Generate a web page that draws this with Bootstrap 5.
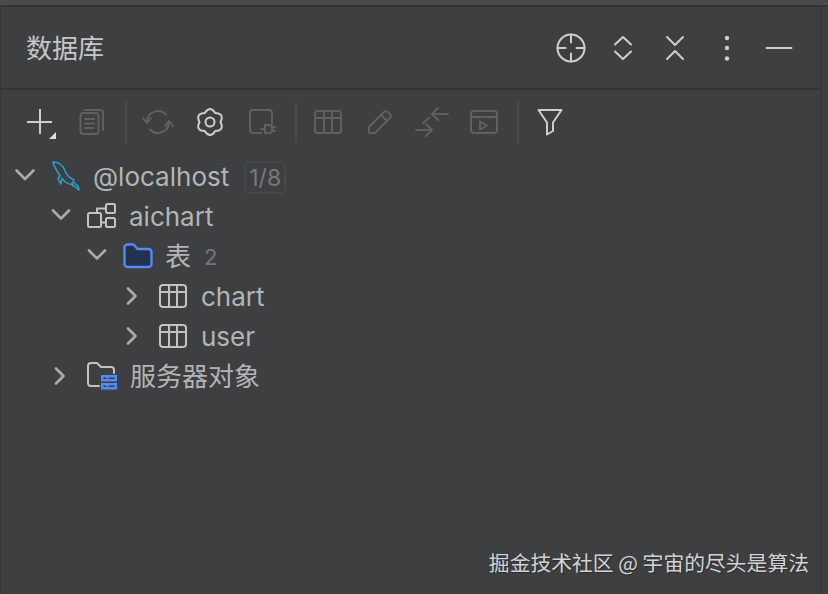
<!DOCTYPE html>
<html lang="zh-CN">
<head>
    <meta charset="UTF-8">
    <meta name="viewport" content="width=device-width, initial-scale=1.0">
    <title>数据库</title>
    <link href="https://cdn.jsdelivr.net/npm/bootstrap@5.3.0/dist/css/bootstrap.min.css" rel="stylesheet">
    <style>
        html, body {
            height: 100%;
        }
        body {
            background-color: #3e3f41;
            color: #b2b4b6;
            font-family: "Inter", "Noto Sans", "Noto Sans CJK SC", sans-serif;
            overflow: hidden;
        }
        .db-window {
            height: 594px;
            border-top: 5px solid #484a4b;
            box-shadow: inset 0 2px 0 #333436;
            padding-top: 2px;
            position: relative;
        }
        .db-panel {
            height: 100%;
            border-left: 1px solid #343537;
            border-right: 2px solid #37383a;
            margin-right: 6px;
            background-color: #3e3f41;
        }
        .db-header {
            height: 83px;
            padding-left: 25px;
            padding-top: 2px;
            border-bottom: 2px solid #323335;
            color: #c4c6c7;
        }
        .db-title {
            font-size: 26px;
            line-height: 1;
        }
        .head-tools {
            margin-right: 15px;
            margin-top: -1px;
        }
        .head-btn {
            width: 52px;
            height: 40px;
        }
        .db-toolbar {
            height: 64px;
            padding-left: 13px;
        }
        .tool-btn {
            width: 52px;
            height: 44px;
            position: relative;
        }
        .tool-sep {
            width: 2px;
            height: 41px;
            margin: 0 5px 0 7px;
            background-color: #4a4c4e;
        }
        .db-tree {
            margin-top: 3px;
        }
        .tree-row {
            height: 40px;
            font-size: 26px;
            line-height: 40px;
            white-space: nowrap;
        }
        .lvl-0 { padding-left: 12px; }
        .lvl-1 { padding-left: 48px; }
        .lvl-2 { padding-left: 84px; }
        .lvl-3 { padding-left: 118px; }
        .lvl-1b { padding-left: 46px; }
        .tw {
            width: 24px;
            flex: none;
        }
        .node-icon {
            flex: none;
            margin-left: 14px;
            margin-top: -2px;
        }
        .lvl-3 .node-icon, .lvl-1b .node-icon {
            margin-left: 16px;
        }
        .node-name {
            margin-left: 12px;
        }
        .lvl-3 .node-name {
            margin-left: 14px;
        }
        .count-tag {
            margin-left: 15px;
            width: 42px;
            height: 33px;
            line-height: 30px;
            font-size: 23px;
            text-align: center;
            color: #77797b;
            border: 2px solid #47484a;
            border-radius: 6px;
        }
        .count-plain {
            margin-left: 13px;
            font-size: 22px;
            color: #737577;
        }
        .db-mark {
            position: absolute;
            right: 19px;
            bottom: 19px;
            font-size: 20.800px;
            line-height: 1.2;
            color: #d2d3d4;
            text-shadow: 1px 1px 1px #2c2d2e;
            font-family: "Noto Sans CJK SC", sans-serif;
        }
        svg {
            display: block;
            fill: none;
            stroke-linecap: round;
            stroke-linejoin: round;
        }
        .ic-on { stroke: #cdced0; stroke-width: 2; }
        .ic-off { stroke: #5e6062; stroke-width: 2; }
        .ic-tree { stroke: #c2c3c5; stroke-width: 2; }
        .ic-chev { stroke: #a9abad; stroke-width: 2.6; }
    </style>
</head>
<body>

<div class="db-window">
    <div class="db-panel">
        <div class="db-header d-flex align-items-center justify-content-between">
            <div class="db-title">数据库</div>
            <div class="head-tools d-flex align-items-center">
                <div class="head-btn d-flex align-items-center justify-content-center">
                    <svg class="ic-on" width="30" height="30" viewBox="0 0 30 30"><circle cx="15" cy="15" r="13.500"/><path d="M15 1.500v8M15 20.500v8M1.500 15h8M20.500 15h8"/></svg>
                </div>
                <div class="head-btn d-flex align-items-center justify-content-center">
                    <svg class="ic-on" width="20" height="26" viewBox="0 0 20 26"><path d="M2 9.500l8-7.500 8 7.500M2 16.500l8 7.500 8-7.500"/></svg>
                </div>
                <div class="head-btn d-flex align-items-center justify-content-center">
                    <svg class="ic-on" width="20" height="26" viewBox="0 0 20 26"><path d="M2 2l8 8 8-8M2 24l8-8 8 8"/></svg>
                </div>
                <div class="head-btn d-flex align-items-center justify-content-center">
                    <svg width="6" height="26" viewBox="0 0 6 26"><circle cx="3" cy="3" r="2.200" fill="#cdced0"/><circle cx="3" cy="13" r="2.200" fill="#cdced0"/><circle cx="3" cy="23.500" r="2.200" fill="#cdced0"/></svg>
                </div>
                <div class="head-btn d-flex align-items-center justify-content-center">
                    <svg class="ic-on" width="28" height="4" viewBox="0 0 28 4"><path d="M1.500 2h25"/></svg>
                </div>
            </div>
        </div>

        <div class="db-toolbar d-flex align-items-center">
            <div class="tool-btn d-flex align-items-center justify-content-center">
                <svg width="36" height="36" viewBox="0 0 36 36"><path class="ic-on" d="M18 5v25M5 18h25" stroke-linecap="butt"/><path d="M27 35l7-7v7z" fill="#dcdddf"/></svg>
            </div>
            <div class="tool-btn d-flex align-items-center justify-content-center">
                <svg class="ic-off" width="26" height="28" viewBox="0 0 26 28"><rect x="1.500" y="5" width="18" height="21" rx="3"/><path d="M6 2h15a3 3 0 0 1 3 3v17M6 11h9M6 15.500h9M6 20h9"/></svg>
            </div>
            <div class="tool-sep"></div>
            <div class="tool-btn d-flex align-items-center justify-content-center">
                <svg class="ic-off" width="32" height="26" viewBox="0 0 32 26"><path d="M5 13a11 11 0 0 1 19-7.500M27 13a11 11 0 0 1-19 7.500M1 9l4 5 4-5M23 17l4-5 4 5"/></svg>
            </div>
            <div class="tool-btn d-flex align-items-center justify-content-center">
                <svg class="ic-on" width="28" height="28" viewBox="0 0 28 28"><path d="M8.750 4.910Q14-3 19.250 4.910Q28.720 5.500 24.500 14Q28.720 22.500 19.250 23.090Q14 31 8.750 23.090Q-.72 22.500 3.500 14Q-.72 5.500 8.750 4.910Z"/><circle cx="14" cy="14" r="4.500"/></svg>
            </div>
            <div class="tool-btn d-flex align-items-center justify-content-center">
                <svg class="ic-off" width="28" height="28" viewBox="0 0 28 28"><path d="M13 25H5a3 3 0 0 1-3-3V5a3 3 0 0 1 3-3h16a3 3 0 0 1 3 3v11"/><path d="M13 21h4M17 17h4a3 3 0 0 1 3 3v2a3 3 0 0 1-3 3h-4zM24 19h3M24 23h3"/></svg>
            </div>
            <div class="tool-sep"></div>
            <div class="tool-btn d-flex align-items-center justify-content-center">
                <svg class="ic-off" width="28" height="24" viewBox="0 0 28 24"><rect x="1" y="1" width="26" height="22" rx="3"/><path d="M1 8h26M10 1v22M18 1v22"/></svg>
            </div>
            <div class="tool-btn d-flex align-items-center justify-content-center">
                <svg class="ic-off" width="26" height="26" viewBox="0 0 26 26"><path d="M2 24v-6L17 3a2.800 2.800 0 0 1 4 0l2 2a2.800 2.800 0 0 1 0 4L8 24zM14 6l6 6"/></svg>
            </div>
            <div class="tool-btn d-flex align-items-center justify-content-center">
                <svg class="ic-off" width="34" height="30" viewBox="0 0 34 30"><path d="M33 7H17M23 1l-6 6 6 6M1 23h16M11 17l6 6-6 6M8 16l6-5"/></svg>
            </div>
            <div class="tool-btn d-flex align-items-center justify-content-center">
                <svg class="ic-off" width="28" height="24" viewBox="0 0 28 24"><rect x="1" y="1" width="26" height="22" rx="3"/><path d="M1 7h26M10 11.500v8l7-4z"/></svg>
            </div>
            <div class="tool-sep"></div>
            <div class="tool-btn d-flex align-items-center justify-content-center">
                <svg class="ic-on" width="26" height="28" viewBox="0 0 26 28"><path d="M1.500 2h23L16 14.500V23l-6 3.500V14.500z"/></svg>
            </div>
        </div>

        <div class="db-tree">
            <div class="tree-row lvl-0 d-flex align-items-center">
                <svg class="ic-chev tw" width="24" height="24" viewBox="0 0 24 24"><path d="M3.500 5.500l8.500 8.500 8.500-8.500"/></svg>
                <svg class="node-icon" width="30" height="30" viewBox="0 0 30 30" stroke="#2a9fd0" stroke-width="1.500"><path d="M2 1c6 0 10 3 12 9 1.500 4 5 7 9 9l-1 2 5 4 1 4-6-5c-5-1-9-3-11-7l-1 6-3-5 2-3C6 10 3 6 2 1zM21 22l1 3"/></svg>
                <span class="node-name">@localhost</span>
                <span class="count-tag">1/8</span>
            </div>
            <div class="tree-row lvl-1 d-flex align-items-center">
                <svg class="ic-chev tw" width="24" height="24" viewBox="0 0 24 24"><path d="M4 5.500l8 8 8-8"/></svg>
                <svg class="ic-tree node-icon" width="30" height="26" viewBox="0 0 30 26"><rect x="1" y="10" width="13" height="14" rx="1.500"/><rect x="19" y="1" width="9" height="9" rx="1.500"/><rect x="19" y="15" width="9" height="9" rx="1.500"/><path d="M10 10V5.500h9M14 19.500h5"/></svg>
                <span class="node-name">aichart</span>
            </div>
            <div class="tree-row lvl-2 d-flex align-items-center">
                <svg class="ic-chev tw" width="24" height="24" viewBox="0 0 24 24"><path d="M4 5.500l8 8 8-8"/></svg>
                <svg class="node-icon" width="30" height="26" viewBox="0 0 30 26" stroke="#548af7" stroke-width="2.400"><path d="M1.500 4.500a3 3 0 0 1 3-3h6l4 4.500h11a3 3 0 0 1 3 3v12a3 3 0 0 1-3 3h-21a3 3 0 0 1-3-3z" fill="#25324d"/></svg>
                <span class="node-name">表</span>
                <span class="count-plain">2</span>
            </div>
            <div class="tree-row lvl-3 d-flex align-items-center">
                <svg class="ic-chev tw" width="24" height="24" viewBox="0 0 24 24"><path d="M9 3.500l7.500 7.500-7.500 7.500"/></svg>
                <svg class="ic-tree node-icon" width="28" height="24" viewBox="0 0 28 24"><rect x="1" y="1" width="26" height="22" rx="3"/><path d="M1 8h26M10 1v22M18 1v22"/></svg>
                <span class="node-name">chart</span>
            </div>
            <div class="tree-row lvl-3 d-flex align-items-center">
                <svg class="ic-chev tw" width="24" height="24" viewBox="0 0 24 24"><path d="M9 3.500l7.500 7.500-7.500 7.500"/></svg>
                <svg class="ic-tree node-icon" width="28" height="24" viewBox="0 0 28 24"><rect x="1" y="1" width="26" height="22" rx="3"/><path d="M1 8h26M10 1v22M18 1v22"/></svg>
                <span class="node-name">user</span>
            </div>
            <div class="tree-row lvl-1b d-flex align-items-center">
                <svg class="ic-chev tw" width="24" height="24" viewBox="0 0 24 24"><path d="M9 3.500l7.500 7.500-7.500 7.500"/></svg>
                <svg class="node-icon" width="31" height="28" viewBox="0 0 31 28"><path class="ic-tree" d="M12 24H4a3 3 0 0 1-3-3V4a3 3 0 0 1 3-3h6l4 4h10a3 3 0 0 1 3 3v3"/><rect x="14" y="13" width="16" height="6.500" fill="#548af7"/><rect x="14" y="21" width="16" height="6.500" fill="#548af7"/><path d="M17 16.200h2M22 16.200h5M17 24.200h2M22 24.200h5" stroke="#3e3f41" stroke-width="1.600"/></svg>
                <span class="node-name">服务器对象</span>
            </div>
        </div>
    </div>
    <div class="db-mark">掘金技术社区 @ 宇宙的尽头是算法</div>
</div>

<script src="https://cdn.jsdelivr.net/npm/bootstrap@5.3.0/dist/js/bootstrap.bundle.min.js"></script>
</body>
</html>
